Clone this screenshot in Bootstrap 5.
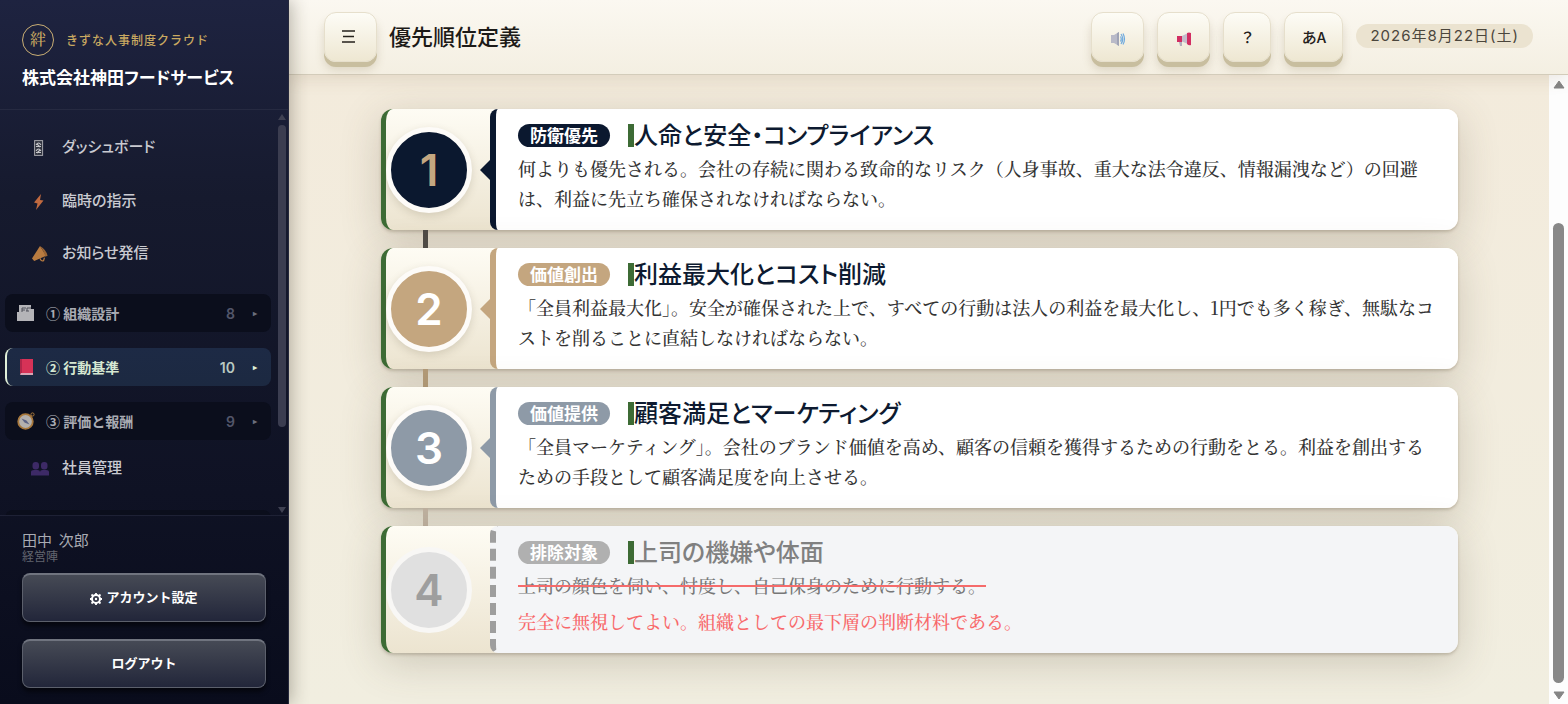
<!DOCTYPE html>
<html lang="ja">
<head>
<meta charset="utf-8">
<meta name="viewport" content="width=device-width, initial-scale=1">
<title>優先順位定義</title>
<link href="https://cdn.jsdelivr.net/npm/bootstrap@5.3.0/dist/css/bootstrap.min.css" rel="stylesheet">
<style>
  body { font-family: "Noto Sans CJK JP", sans-serif; font-feature-settings: "palt"; color: #1c1a17; }
  a { text-decoration: none; color: inherit; }

  /* sidebar */
  .side { width: 289px; background: linear-gradient(180deg, #1e2340 0%, #161a2e 28%, #0f1224 70%, #090c1c 100%); box-shadow: 3px 0 16px rgba(40, 32, 20, .3); z-index: 3; border-right: 1px solid #25283c; }
  .side-head { padding: 24px 22px 0; height: 110px; border-bottom: 1px solid #262a41; }
  .crest { width: 32px; height: 32px; border: 1px solid #c9ae74; color: #c9a961; font-size: 16px; line-height: 1; padding-bottom: 2px; font-weight: 500; font-family: "Noto Serif CJK JP", "Noto Sans CJK JP", serif; }
  .brand { color: #c9a961; font-size: 12px; letter-spacing: 1px; font-weight: 500; font-feature-settings: normal; }
  .company { color: #fff; font-size: 17px; line-height: 24px; font-weight: 700; margin-top: 9px; }
  .side-nav { padding: 9px 5px 0 5px; }
  .navlink { height: 54px; padding-left: 26px; gap: 15px; color: #c9cad1; font-size: 15px; font-weight: 500; }
  .navlink svg { width: 16px; height: 16px; margin-top: 4px; }
  .navlink .wide { width: 18px; margin-right: -2px; }
  .group { height: 38px; margin-bottom: 16px; padding: 0 10px 0 12px; border-radius: 8px; background: #0b0e1c; color: #a9abb3; font-size: 14px; font-weight: 700; font-feature-settings: normal; }
  .group svg { width: 18px; height: 18px; margin-right: 11px; }
  .group .cnt { color: #53566a; margin-left: auto; font-family: Inter, "Noto Sans CJK JP", sans-serif; font-weight: 600; }
  .group .tri { font-size: 8px; width: 8px; margin-left: 18px; color: #6b6e7c; }
  .group.on { background: linear-gradient(180deg, #1d2a45, #1c2941); border-left: 2px solid #e0efd8; padding-left: 10px; color: #d6e8d2; }
  .group.on .cnt { color: #b9c9c2; }
  .group.on .tri { color: #e0efd8; }
  .side-bar { width: 12px; padding: 4px 2px 2px; color: #3f4152; }
  .side-bar .thumb { width: 8px; border-radius: 4px; background: #3b3d50; flex: 0 0 302px; margin-top: 5px; }
  .arr { display: block; width: 8px; height: 6px; }
  .side-foot { border-top: 1px solid #1e2135; padding: 13px 22px 16px; }
  .uname { color: #a9abb3; font-size: 15px; line-height: 21px; white-space: pre; }
  .urole { color: #62656f; font-size: 12px; line-height: 12px; margin-bottom: 11px; }
  .btn-dark-soft { height: 49px; border-radius: 8px; border: 1px solid #5c606c; border-top: 2px solid #70747f; padding: 0 0 2px; background: linear-gradient(180deg, #464a55, #22263a); box-shadow: 0 4px 4px rgba(0, 0, 0, .5); color: #fff; font-size: 13px; font-weight: 700; }
  .btn-dark-soft:hover { color: #fff; background: #464a55; }
  .btn-dark-soft + .btn-dark-soft { margin-top: 17px; }

  /* top bar */
  .top { height: 75px; padding: 0 35px; background: linear-gradient(180deg, #fbf8f1, #f4efe2); border-bottom: 1px solid #d3ccba; box-shadow: 0 4px 16px rgba(120, 95, 60, .14); z-index: 2; }
  .key { height: 50px; padding: 0; border: 1px solid #e6dfcc; border-radius: 12px; background: linear-gradient(180deg, #fdfcf6, #eee7d2); box-shadow: 0 5px 0 #c8be9f, 0 8px 10px rgba(120, 100, 60, .2); color: #24211b; font-size: 15px; font-weight: 500; }
  .key:hover { background: #eee7d2; }
  .w-key { width: 53px; }
  .w-key-s { width: 48px; }
  .w-key-l { width: 59px; }
  .page-title { font-size: 22px; font-weight: 500; margin: 0 0 4px 12px; }
  .date-pill { height: 24px; padding: 0 14px; margin-bottom: 2px; border-radius: 12px; background: #ebe3d0; color: #4b463c; font-family: Inter, "Noto Sans CJK JP", sans-serif; font-size: 15px; letter-spacing: 1px; line-height: 24px; }

  /* ranking */
  .canvas { background: linear-gradient(180deg, #f3ebdc, #f1eee0); }
  .ranks { padding: 34px 91px 50px 92px; }
  .rank { border-radius: 12px; border-left: 5px solid #3d6b35; background: linear-gradient(180deg, #fefcf4, #ece4d0); box-shadow: 0 2px 3px rgba(90, 75, 50, .25), 0 10px 40px rgba(90, 80, 60, .24); position: relative; }
  .num-col { width: 104px; }
  .num { width: 86px; height: 86px; border: 5px solid #fdfbf8; box-shadow: 0 3px 8px rgba(90, 75, 50, .18); font-family: Inter, "Noto Sans CJK JP", sans-serif; font-size: 44px; line-height: 1; font-weight: 600; color: #fff; background-color: var(--tone); }
  .rank-body { border-left: 6px solid var(--tone); border-radius: 8px 12px 12px 8px; background: #fff; padding: 10px 22px 17px; position: relative; min-width: 0; }
  .rank-body::before { content: ""; position: absolute; left: -16px; top: 50%; margin-top: -10px; border: 10px solid transparent; border-left: 0; border-right-color: var(--tone); }
  .tag { height: 23px; line-height: 21px; padding: 0 12px; border-radius: 12px; background: var(--tone); color: #fff; font-size: 17px; font-weight: 700; font-feature-settings: normal; }
  .rank-head { height: 32px; gap: 18px; }
  .rank-title { margin: 0; padding-bottom: 3px; border-left: 6px solid #3d6b35; font-size: 24px; line-height: 20px; font-weight: 500; color: #0d1a30; }
  .desc { margin: 2px 0 0; font-family: "Noto Serif CJK JP", "Noto Sans CJK JP", serif; font-feature-settings: normal; font-size: 18px; line-height: 30px; font-weight: 500; color: #333; }
  .link-v { width: 5px; height: 18px; margin-left: 42px; background: var(--tone); position: relative; }
  .t1 { --tone: #0b182f; } .t1 .num { color: #c4a781; }
  .t2 { --tone: #c4a67f; }
  .t3 { --tone: #8e9aa7; }
  .t4 { --tone: #9e9e9e; }
  .t4 .num { background-color: #e0e0e0; color: #9e9e9e; box-shadow: none; border-color: #f8f7f5; }
  .t4 .rank-body { background: #f4f5f7; border-left-style: dashed; }
  .t4 .rank-body::before { display: none; }
  .t4 .tag { background: #b0b0b0; }
  .t4 .rank-title { color: #808080; }
  .t4 .desc { color: #777; }
  .t4 s { text-decoration: line-through 2px #f56b6b; }
  .t4 .warn { color: #f8696b; margin-top: 6px; }
  .c1 { --tone: #4f4b47; } .c2 { --tone: #b39b78; } .c3 { --tone: #bfb1a0; }
  .page-bar { width: 19px; background: #fdfdfd; padding: 5px 4px 4px; color: #858585; }
  .page-bar .thumb { width: 11px; border-radius: 6px; background: #888; flex: 0 0 460px; }
  .page-bar .arr { width: 12px; height: 9px; }
</style>
</head>
<body>
<div class="d-flex vh-100 overflow-hidden">

  <aside class="side d-flex flex-column flex-shrink-0 position-relative">
    <div class="side-head flex-shrink-0">
      <div class="d-flex align-items-center">
        <span class="crest rounded-circle d-flex align-items-center justify-content-center">絆</span>
        <span class="brand ps-2 ms-1">きずな人事制度クラウド</span>
      </div>
      <div class="company">株式会社神田フードサービス</div>
    </div>

    <div class="d-flex flex-fill overflow-hidden">
      <nav class="side-nav flex-fill">
        <a href="#" class="navlink d-flex align-items-center">
          <svg viewBox="0 0 16 16"><rect x="3.600" y=".6" width="8" height="14.800" fill="#30333f" stroke="#a5a5ab"/><path d="M5 5q2.500-4 5 0M5 11q2.500-4 5 0M5 6.500h5M5 12.500h5M6 4l3 3M6 13l3-3" fill="none" stroke="#c5c5c9" stroke-width="1.100"/></svg>
          <span>ダッシュボード</span></a>
        <a href="#" class="navlink d-flex align-items-center">
          <svg viewBox="0 0 16 16"><path d="M10 0 3 8.500l3.500 1L5 16l7.500-9.500-3.500-.5z" fill="#c0693f"/></svg>
          <span>臨時の指示</span></a>
        <a href="#" class="navlink d-flex align-items-center" style="height:50px">
          <svg class="wide" viewBox="0 0 18 18"><path d="M9 0 0 14l2.500 3L16 11z" fill="#b87b40"/><path d="M9 0q7 4 8.500 11l-2.500 1Q13 5 9 0z" fill="#9a6535"/><path d="M9 14q1 3.500 4 2.500l1-3.500" fill="none" stroke="#b87b40" stroke-width="1.400"/></svg>
          <span>お知らせ発信</span></a>

        <div style="padding-top:17px">
          <a href="#" class="group d-flex align-items-center">
            <svg viewBox="0 0 18 18"><path d="M2 1h12v4h3v12H0V8h2z" fill="#b4b4b8"/><path d="M5 4h4M5 4v4M5 6h3M10 7V4h4M9 7h3" stroke="#4f515b" fill="none"/></svg>
            <span>① 組織設計</span><span class="cnt">8</span><span class="tri">▸</span></a>
          <a href="#" class="group on d-flex align-items-center">
            <svg viewBox="0 0 18 18"><path d="M3 1h13v15H3z" fill="#d63257"/><path d="M3 1h2v15H3z" fill="#b0264a"/><path d="M4 15h12v2H3z" fill="#d9a5b5"/></svg>
            <span>② 行動基準</span><span class="cnt">10</span><span class="tri">▸</span></a>
          <a href="#" class="group d-flex align-items-center mb-0">
            <svg viewBox="0 0 18 18"><circle cx="8.500" cy="9.500" r="7.300" fill="#b3b0ae" stroke="#a8783c" stroke-width="1.800"/><path d="m4.500 6.500 5 2 3 4-5-2z" fill="#5c6385"/><circle cx="15.500" cy="2.500" r="1.600" fill="none" stroke="#a8783c"/></svg>
            <span>③ 評価と報酬</span><span class="cnt">9</span><span class="tri">▸</span></a>
        </div>

        <a href="#" class="navlink d-flex align-items-center">
          <svg class="wide" viewBox="0 0 18 16"><g fill="#3d2a66"><rect x="1.500" y="1" width="6.500" height="7.500" rx="3"/><rect x="10" y="1" width="6.500" height="7.500" rx="3"/><path d="M0 14.500V11q0-2 3-2h3.500Q9 9 9 11q0-2 2.500-2H15q3 0 3 2v3.500z"/></g></svg>
          <span>社員管理</span></a>
        <a href="#" class="group d-flex align-items-center mt-3" aria-label="次のグループ"></a>
      </nav>
      <div class="side-bar d-flex flex-column" aria-hidden="true">
        <svg class="arr" viewBox="0 0 8 6"><path d="M4 0 8 6H0z" fill="currentColor"/></svg>
        <span class="thumb"></span>
        <svg class="arr mt-auto" viewBox="0 0 8 6"><path d="M0 0h8L4 6z" fill="currentColor"/></svg>
      </div>
    </div>

    <div class="side-foot flex-shrink-0">
      <div class="uname">田中  次郎</div>
      <div class="urole">経営陣</div>
      <button type="button" class="btn btn-dark-soft w-100 d-block">
        <svg width="12" height="12" viewBox="0 0 12 12" class="me-1"><circle cx="6" cy="6" r="4" fill="none" stroke="#fff" stroke-width="2"/><circle cx="6" cy="6" r="1.200" fill="#fff"/><path d="M6 0v2M6 10v2M0 6h2M10 6h2M1.500 1.500l1.400 1.400M9.100 9.100l1.400 1.400M1.500 10.500l1.400-1.400M9.100 2.900l1.400-1.400" stroke="#fff" stroke-width="1.800"/></svg>アカウント設定</button>
      <button type="button" class="btn btn-dark-soft w-100 d-block">ログアウト</button>
    </div>
  </aside>

  <div class="d-flex flex-column flex-fill" style="min-width:0">
    <header class="top d-flex align-items-center flex-shrink-0 position-relative">
      <button type="button" class="btn key w-key pe-1" aria-label="メニュー">
        <svg width="13" height="13" viewBox="0 0 13 13" class="mb-1"><path d="M0 1h13M1 6.500h11M0 12h13" stroke="#24211b" stroke-width="1.500"/></svg></button>
      <h1 class="page-title">優先順位定義</h1>
      <div class="d-flex align-items-center ms-auto" style="gap:13px">
        <button type="button" class="btn key w-key" aria-label="音声">
          <svg width="16" height="14" viewBox="0 0 16 14"><path d="M1 3h3l5-3v14l-5-3H1z" fill="#b9bac8"/><path d="M7 1.200 9 0v14l-2-1.200z" fill="#9fa3b5"/><path d="M10.500 4.500q1.500 2.500 0 5M11 2q3.500 5 0 10M13 1.500q3 5.500 0 11" fill="none" stroke="#6faade" stroke-width="1.200"/></svg></button>
        <button type="button" class="btn key w-key" aria-label="お知らせ">
          <svg width="16" height="14" viewBox="0 0 16 14"><path d="M1 4h5v6H1z" fill="#d22e62"/><path d="M6 4l6-3v11L6 9.500z" fill="#c5bccb"/><path d="M11 1q2-1 4 0v12q-2 1-4-1z" fill="#d22e62"/><path d="M3 10h3v4H4z" fill="#b5adbd"/></svg></button>
        <button type="button" class="btn key w-key-s">？</button>
        <button type="button" class="btn key w-key-l">あA</button>
        <span class="date-pill">2026年8月22日(土)</span>
      </div>
    </header>

    <div class="d-flex flex-fill overflow-hidden">
      <main class="canvas flex-fill overflow-hidden" style="min-width:0">
        <div class="ranks">
          <section class="rank t1 d-flex">
            <div class="num-col d-flex align-items-center flex-shrink-0"><div class="num rounded-circle d-flex align-items-center justify-content-center">1</div></div>
            <div class="rank-body flex-fill">
              <div class="rank-head d-flex align-items-center"><span class="tag">防衛優先</span><h2 class="rank-title">人命と安全・コンプライアンス</h2></div>
              <p class="desc">何よりも優先される。会社の存続に関わる致命的なリスク（人身事故、重大な法令違反、情報漏洩など）の回避は、利益に先立ち確保されなければならない。</p>
            </div>
          </section>
          <div class="link-v c1"></div>
          <section class="rank t2 d-flex">
            <div class="num-col d-flex align-items-center flex-shrink-0"><div class="num rounded-circle d-flex align-items-center justify-content-center">2</div></div>
            <div class="rank-body flex-fill">
              <div class="rank-head d-flex align-items-center"><span class="tag">価値創出</span><h2 class="rank-title">利益最大化とコスト削減</h2></div>
              <p class="desc">「全員利益最大化」。安全が確保された上で、すべての行動は法人の利益を最大化し、1円でも多く稼ぎ、無駄なコストを削ることに直結しなければならない。</p>
            </div>
          </section>
          <div class="link-v c2"></div>
          <section class="rank t3 d-flex">
            <div class="num-col d-flex align-items-center flex-shrink-0"><div class="num rounded-circle d-flex align-items-center justify-content-center">3</div></div>
            <div class="rank-body flex-fill">
              <div class="rank-head d-flex align-items-center"><span class="tag">価値提供</span><h2 class="rank-title">顧客満足とマーケティング</h2></div>
              <p class="desc">「全員マーケティング」。会社のブランド価値を高め、顧客の信頼を獲得するための行動をとる。利益を創出するための手段として顧客満足度を向上させる。</p>
            </div>
          </section>
          <div class="link-v c3"></div>
          <section class="rank t4 d-flex">
            <div class="num-col d-flex align-items-center flex-shrink-0"><div class="num rounded-circle d-flex align-items-center justify-content-center">4</div></div>
            <div class="rank-body flex-fill">
              <div class="rank-head d-flex align-items-center"><span class="tag">排除対象</span><h2 class="rank-title">上司の機嫌や体面</h2></div>
              <p class="desc"><s>上司の顔色を伺い、忖度し、自己保身のために行動する。</s></p>
              <p class="desc warn">完全に無視してよい。組織としての最下層の判断材料である。</p>
            </div>
          </section>
        </div>
      </main>
      <div class="page-bar d-flex flex-column flex-shrink-0" aria-hidden="true">
        <svg class="arr" viewBox="0 0 12 9"><path d="M6 1 11 8H1z" fill="currentColor" stroke="currentColor" stroke-linejoin="round"/></svg>
        <span class="thumb mt-auto"></span>
        <svg class="arr mt-2" viewBox="0 0 12 9"><path d="M1 1h10L6 8z" fill="currentColor" stroke="currentColor" stroke-linejoin="round"/></svg>
      </div>
    </div>
  </div>
</div>
<script src="https://cdn.jsdelivr.net/npm/bootstrap@5.3.0/dist/js/bootstrap.bundle.min.js"></script>
</body>
</html>
